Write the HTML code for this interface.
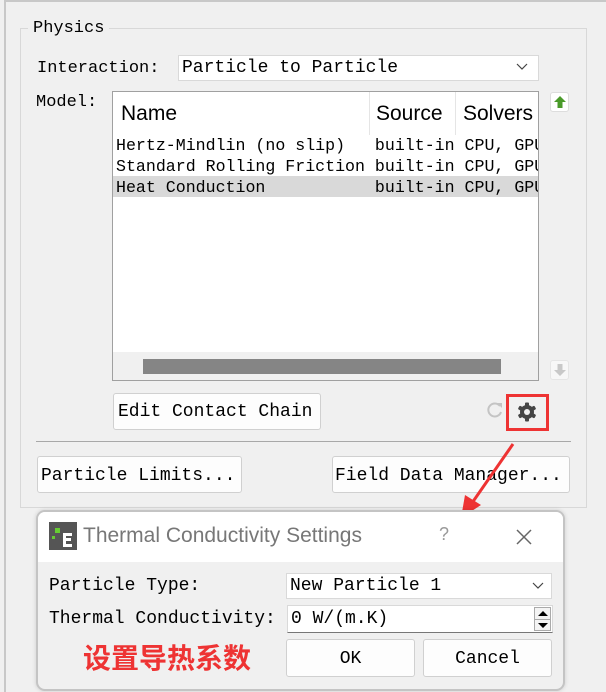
<!DOCTYPE html>
<html><head><meta charset="utf-8"><style>
*{box-sizing:border-box;margin:0;padding:0}
body{width:606px;height:692px;background:#f0f0f0;position:relative;overflow:hidden;font-family:"Liberation Mono",monospace;color:#000}
.a{position:absolute}
.mono{font-family:"Liberation Mono","Noto Sans CJK SC",monospace;white-space:pre}
.btn{position:absolute;background:#fdfdfd;border:1px solid #d0d0d0;border-radius:3px;font-size:18px;line-height:34px;white-space:pre;font-family:"Liberation Mono",monospace}
.combo{position:absolute;background:#fff;border:1px solid #d9d9d9;white-space:pre}
</style></head><body>
<div class="a" style="left:4px;top:0;width:2px;height:692px;background:#c8c8c8"></div>
<div class="a" style="left:4px;top:0;width:602px;height:2px;background:#c8c8c8"></div>
<div class="a" style="left:20px;top:28px;width:567px;height:480px;border:1px solid #d8d8d8"></div>
<div class="a mono" style="left:28px;top:17px;background:#f0f0f0;padding:0 5px;font-size:17px;line-height:24px">Physics</div>
<div class="a mono" style="left:37px;top:57px;font-size:17px;line-height:24px">Interaction:</div>
<div class="combo" style="left:178px;top:55px;width:361px;height:26px;font-size:18px;line-height:25px;padding-left:3px">Particle to Particle</div>
<svg class="a" style="left:515px;top:62px" width="14" height="10"><path d="M2 2 L7 7 L12 2" stroke="#444" fill="none" stroke-width="1.2"/></svg>
<div class="a mono" style="left:36px;top:91px;font-size:17px;line-height:24px">Model:</div>
<div class="a" style="left:112px;top:91px;width:427px;height:290px;background:#fff;border:1px solid #a0a0a0;overflow:hidden">
 <div class="a" style="left:0;top:0;width:427px;height:43px;font-family:'Liberation Sans',sans-serif;font-size:21px;line-height:44px">
  <span class="a" style="left:8px">Name</span>
  <div class="a" style="left:256px;top:0;width:1px;height:43px;background:#e5e5e5"></div>
  <span class="a" style="left:263px">Source</span>
  <div class="a" style="left:342px;top:0;width:1px;height:43px;background:#e5e5e5"></div>
  <span class="a" style="left:350px">Solvers</span>
 </div>
 <div class="a" style="left:0;top:84px;width:427px;height:21px;background:#d9d9d9"></div>
 <div class="a mono" style="left:3px;top:43px;font-size:16.6px;line-height:21px">Hertz-Mindlin (no slip)   built-in CPU, GPU
Standard Rolling Friction built-in CPU, GPU
Heat Conduction           built-in CPU, GPU</div>
 <div class="a" style="left:0;top:260px;width:427px;height:30px;background:#f0f0f0"></div>
 <div class="a" style="left:30px;top:267px;width:358px;height:15px;background:#858585"></div>
</div>
<div class="a" style="left:550px;top:92px;width:19px;height:20px;background:#fff;border:1px solid #ddd;border-radius:3px"></div>
<svg class="a" style="left:552px;top:94px" width="16" height="16"><path d="M8 2 L14 8 L10.5 8 L10.5 14 L5.5 14 L5.5 8 L2 8Z" fill="#4a9a2a"/></svg>
<div class="a" style="left:550px;top:360px;width:19px;height:20px;background:#f7f7f7;border:1px solid #e5e5e5;border-radius:3px"></div>
<svg class="a" style="left:552px;top:362px" width="16" height="16"><path d="M8 14 L14 8 L10.5 8 L10.5 2 L5.5 2 L5.5 8 L2 8Z" fill="#c8c8c8"/></svg>
<div class="btn" style="left:113px;top:393px;width:208px;height:37px;padding-left:4px;line-height:37px">Edit Contact Chain</div>
<svg class="a" style="left:486px;top:401px" width="18" height="18"><path d="M14 5 A6.5 6.5 0 1 0 15 11" stroke="#c4c4c4" stroke-width="2" fill="none"/><path d="M11 2 L16 2 L16 7Z" fill="#c4c4c4"/></svg>
<div class="a" style="left:506px;top:394px;width:43px;height:37px;border:3px solid #ee3333"></div>
<svg class="a" style="left:516px;top:401px" width="22" height="22" viewBox="0 0 22 22"><g fill="#444"><circle cx="11" cy="11" r="7"/><rect x="9" y="1.5" width="4" height="19" rx="1"/><rect x="9" y="1.5" width="4" height="19" rx="1" transform="rotate(60 11 11)"/><rect x="9" y="1.5" width="4" height="19" rx="1" transform="rotate(120 11 11)"/></g><circle cx="11" cy="11" r="3" fill="#f0f0f0"/></svg>
<div class="a" style="left:36px;top:441px;width:535px;height:1px;background:#a8a8a8"></div>
<div class="btn" style="left:37px;top:456px;width:205px;height:37px;padding-left:3px;line-height:38px">Particle Limits...</div>
<div class="btn" style="left:332px;top:456px;width:238px;height:37px;padding-left:2px;line-height:38px">Field Data Manager...</div>
<svg class="a" style="left:455px;top:440px" width="70" height="85"><path d="M58 4 L17 63" stroke="#ee3333" stroke-width="3"/><path d="M6 78 L10 55 L26 65Z" fill="#ee3333"/></svg>
<div class="a" style="left:36px;top:510px;width:529px;height:181px;border:2px solid #c4c4c4;border-radius:9px;background:#f0f0f0;overflow:hidden;box-shadow:0 0 4px rgba(0,0,0,.15)">
 <div class="a" style="left:0;top:0;width:527px;height:50px;background:#fff"></div>
 <div class="a" style="left:11px;top:10px;width:28px;height:28px;background:#555"></div>
 <div class="a" style="left:17px;top:16px;width:5px;height:5px;background:#6c3"></div>
 <div class="a" style="left:14px;top:24px;width:3px;height:3px;background:#6c3"></div>
 <div class="a" style="left:25px;top:21px;width:9px;height:14px;border:3px solid #fff;border-right:none"></div>
 <div class="a" style="left:25px;top:26px;width:8px;height:3px;background:#fff"></div>
 <div class="a" style="left:45px;top:10px;font-family:'Liberation Sans',sans-serif;font-size:21px;line-height:28px;color:#777">Thermal Conductivity Settings</div>
 <div class="a" style="left:401px;top:12px;font-family:'Liberation Sans',sans-serif;font-size:18px;color:#999">?</div>
 <svg class="a" style="left:477px;top:16px" width="18" height="18"><path d="M2 2 L16 16 M16 2 L2 16" stroke="#666" stroke-width="1.5"/></svg>
 <div class="a mono" style="left:11px;top:62px;font-size:18px;line-height:24px">Particle Type:</div>
 <div class="combo" style="left:248px;top:61px;width:266px;height:26px;font-size:18px;line-height:25px;padding-left:3px">New Particle 1</div>
 <svg class="a" style="left:494px;top:69px" width="12" height="9"><path d="M1 2 L6 7 L11 2" stroke="#444" fill="none" stroke-width="1.2"/></svg>
 <div class="a mono" style="left:11px;top:95px;font-size:18px;line-height:24px">Thermal Conductivity:</div>
 <div class="combo" style="left:249px;top:93px;width:266px;height:28px;font-size:18px;line-height:26px;padding-left:3px;border-bottom:1px solid #777">0 W/(m.K)</div>
 <div class="a" style="left:496px;top:95px;width:17px;height:24px;border:1px solid #aaa;background:#f4f4f4"></div>
 <svg class="a" style="left:497px;top:96px" width="16" height="24"><path d="M3 8 L8 3 L13 8Z M3 15 L8 20 L13 15Z" fill="#000"/><path d="M0 11.5 H16" stroke="#aaa"/></svg>
 <div style="position:absolute;left:45px;top:127px;color:#ee3333;font-family:'Noto Sans CJK SC',sans-serif;font-size:28px;line-height:36px;font-weight:bold">设置导热系数</div>
 <div class="btn" style="left:248px;top:127px;width:129px;height:38px;text-align:center;line-height:38px">OK</div>
 <div class="btn" style="left:385px;top:127px;width:129px;height:38px;text-align:center;line-height:38px">Cancel</div>
</div>
</body></html>
